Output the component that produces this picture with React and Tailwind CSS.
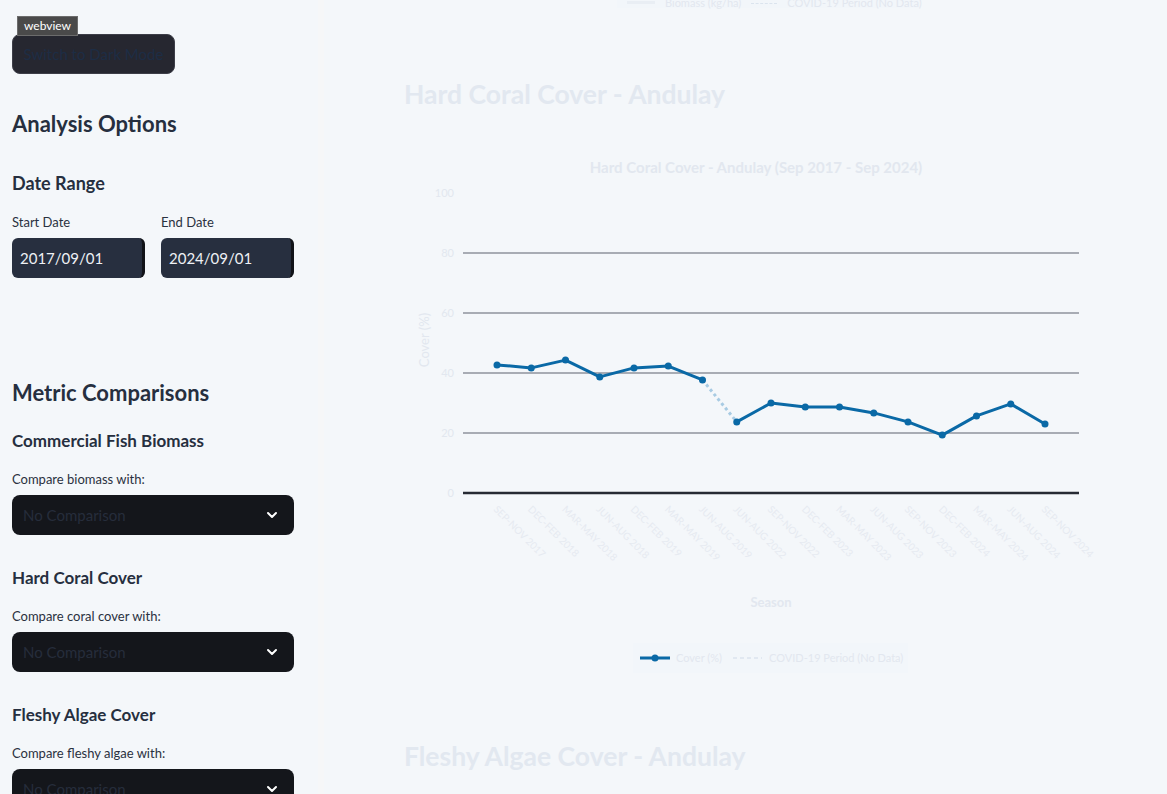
import { ChevronDown } from 'lucide-react';

const seasons = [
  'SEP-NOV 2017', 'DEC-FEB 2018', 'MAR-MAY 2018', 'JUN-AUG 2018', 'DEC-FEB 2019',
  'MAR-MAY 2019', 'JUN-AUG 2019', 'JUN-AUG 2022', 'SEP-NOV 2022', 'DEC-FEB 2023',
  'MAR-MAY 2023', 'JUN-AUG 2023', 'SEP-NOV 2023', 'DEC-FEB 2024', 'MAR-MAY 2024',
  'JUN-AUG 2024', 'SEP-NOV 2024',
];
const cover = [42.7, 41.7, 44.3, 38.7, 41.7, 42.3, 37.7, 23.7, 30, 28.7, 28.7, 26.7, 23.7, 19.3, 25.7, 29.7, 23];

const font = { fontFamily: 'Lato, "Open Sans", sans-serif' };

// chart uses page coordinates through its viewBox
const X0 = 497;
const DX = 34.25;
const yOf = (v) => 493 - v * 3;

function CoverChart() {
  const pts = cover.map((v, i) => [X0 + i * DX, yOf(v)]);
  const before = pts.slice(0, 7);
  const after = pts.slice(7);
  const path = (arr) => arr.map((p, i) => `${i ? 'L' : 'M'}${p[0]},${p[1]}`).join(' ');

  return (
    <svg width="720" height="550" viewBox="404 140 720 550" style={font} className="block">
      <text x="756" y="173" textAnchor="middle" fontSize="15" fontWeight="700" fill="#e2e7ef">
        Hard Coral Cover - Andulay (Sep 2017 - Sep 2024)
      </text>

      {[20, 40, 60, 80].map((v) => (
        <line key={v} x1="463" x2="1079" y1={yOf(v)} y2={yOf(v)} stroke="#5d636f" strokeWidth="1.2" />
      ))}
      <line x1="463" x2="1079" y1="493" y2="493" stroke="#262a33" strokeWidth="2.5" />

      {[0, 20, 40, 60, 80, 100].map((v) => (
        <text key={v} x="454" y={yOf(v) + 4} textAnchor="end" fontSize="11" fill="#e2e7ef">
          {v}
        </text>
      ))}
      <text x="429" y="340" transform="rotate(-90 429 340)" textAnchor="middle" fontSize="13" fill="#e2e7ef">
        Cover (%)
      </text>

      {seasons.map((s, i) => {
        const x = X0 + i * DX - 4;
        return (
          <text key={s} x={x} y="510" transform={`rotate(45 ${x} 510)`} fontSize="10" fill="#e6eaf1">
            {s}
          </text>
        );
      })}
      <text x="771" y="607" textAnchor="middle" fontSize="13" fontWeight="700" fill="#e2e7ef">
        Season
      </text>

      <line x1={pts[6][0]} y1={pts[6][1]} x2={pts[7][0]} y2={pts[7][1]} stroke="#a8cbe3" strokeWidth="3" strokeDasharray="3 3" />
      <path d={path(before)} fill="none" stroke="#0a69a6" strokeWidth="3" strokeLinejoin="round" />
      <path d={path(after)} fill="none" stroke="#0a69a6" strokeWidth="3" strokeLinejoin="round" />
      {pts.map((p, i) => (
        <circle key={i} cx={p[0]} cy={p[1]} r="3.5" fill="#0a69a6" />
      ))}

      <rect x="633" y="643" width="275" height="30" fill="#f2f6fa" />
      <line x1="640" x2="670" y1="658" y2="658" stroke="#0a69a6" strokeWidth="3" />
      <circle cx="655" cy="658" r="3.5" fill="#0a69a6" />
      <text x="676" y="662" fontSize="11" fill="#e2e7ef">Cover (%)</text>
      <line x1="733" x2="762" y1="658" y2="658" stroke="#dbe4ee" strokeWidth="1.5" strokeDasharray="4 3" />
      <text x="769" y="662" fontSize="11" fill="#e2e7ef">COVID-19 Period (No Data)</text>
    </svg>
  );
}

function SelectBox() {
  return (
    <div className="h-10 rounded-lg bg-[#14161b] flex items-center justify-between pl-[11px] pr-[14px]">
      <span className="text-[15px] text-[#262d3b]">No Comparison</span>
      <ChevronDown className="w-4 h-4 text-white" strokeWidth={3} />
    </div>
  );
}

function MetricBlock({ title, label }) {
  return (
    <div>
      <h3 className="text-[17px] leading-6 font-bold text-[#262f3f]">{title}</h3>
      <p className="mt-[17px] text-[13px] leading-[18px] text-[#2a3140]">{label}</p>
      <div className="mt-[7px]">
        <SelectBox />
      </div>
    </div>
  );
}

function DateInput({ value }) {
  return (
    <div className="flex-1 h-10 rounded-md bg-[#272f3f] border-r-[3px] border-[#111318] flex items-center pl-2">
      <span className="text-[15px] text-[#eef1f5]">{value}</span>
    </div>
  );
}

export default function App() {
  return (
    <div className="flex h-[794px] overflow-hidden bg-[#f4f7fa]" style={font}>
      {/* Sidebar */}
      <aside className="relative w-[324px] shrink-0 border-r-[6px] border-[#f6f7f8] pl-3 pr-[24px] pt-[34px]">
        <div className="absolute left-[17px] top-[16px] z-10 px-[6px] h-[20px] flex items-center bg-[#4a4a4a] border border-[#6c6c6c] text-[12px] text-white">
          webview
        </div>
        <button className="h-10 w-[163px] rounded-lg bg-[#262730] border border-[#3d3e48] text-[15px] text-[#1d2d45]">
          Switch to Dark Mode
        </button>

        <h2 className="mt-9 text-[22px] leading-7 font-bold text-[#262f3f]">Analysis Options</h2>
        <h3 className="mt-[33px] text-[18px] leading-6 font-bold text-[#262f3f]">Date Range</h3>
        <div className="mt-[18px] flex gap-4">
          <div className="flex-1 flex flex-col">
            <span className="text-[13px] leading-[18px] text-[#2a3140]">Start Date</span>
            <div className="mt-[7px] flex">
              <DateInput value="2017/09/01" />
            </div>
          </div>
          <div className="flex-1 flex flex-col">
            <span className="text-[13px] leading-[18px] text-[#2a3140]">End Date</span>
            <div className="mt-[7px] flex">
              <DateInput value="2024/09/01" />
            </div>
          </div>
        </div>

        <h2 className="mt-[101px] text-[22px] leading-7 font-bold text-[#262f3f]">Metric Comparisons</h2>
        <div className="mt-[22px] flex flex-col gap-[31px]">
          <MetricBlock title="Commercial Fish Biomass" label="Compare biomass with:" />
          <MetricBlock title="Hard Coral Cover" label="Compare coral cover with:" />
          <MetricBlock title="Fleshy Algae Cover" label="Compare fleshy algae with:" />
        </div>
      </aside>

      {/* Main */}
      <main className="flex-1 pl-[80px] relative">
        <div className="ml-[213px] -mt-[22px] w-[303px] h-[30px] bg-[#f2f6fa] flex items-end gap-[10px] pl-[10px] whitespace-nowrap text-[11px] text-[#e2e7ef] leading-none">
          <span className="w-[28px] h-[3px] mb-[4px] bg-[#e9eef4] shrink-0" />
          <span>Biomass (kg/ha)</span>
          <span className="w-[26px] mb-[4px] border-t border-dashed border-[#dbe4ee] shrink-0" />
          <span>COVID-19 Period (No Data)</span>
        </div>
        <h2 className="mt-[68px] text-[26.5px] leading-9 font-bold text-[#e2e8f0]">Hard Coral Cover - Andulay</h2>
        <div className="mt-[28px]">
          <CoverChart />
        </div>
        <h2 className="mt-[48px] text-[26.5px] leading-9 font-bold text-[#e2e8f0]">Fleshy Algae Cover - Andulay</h2>
      </main>
    </div>
  );
}
